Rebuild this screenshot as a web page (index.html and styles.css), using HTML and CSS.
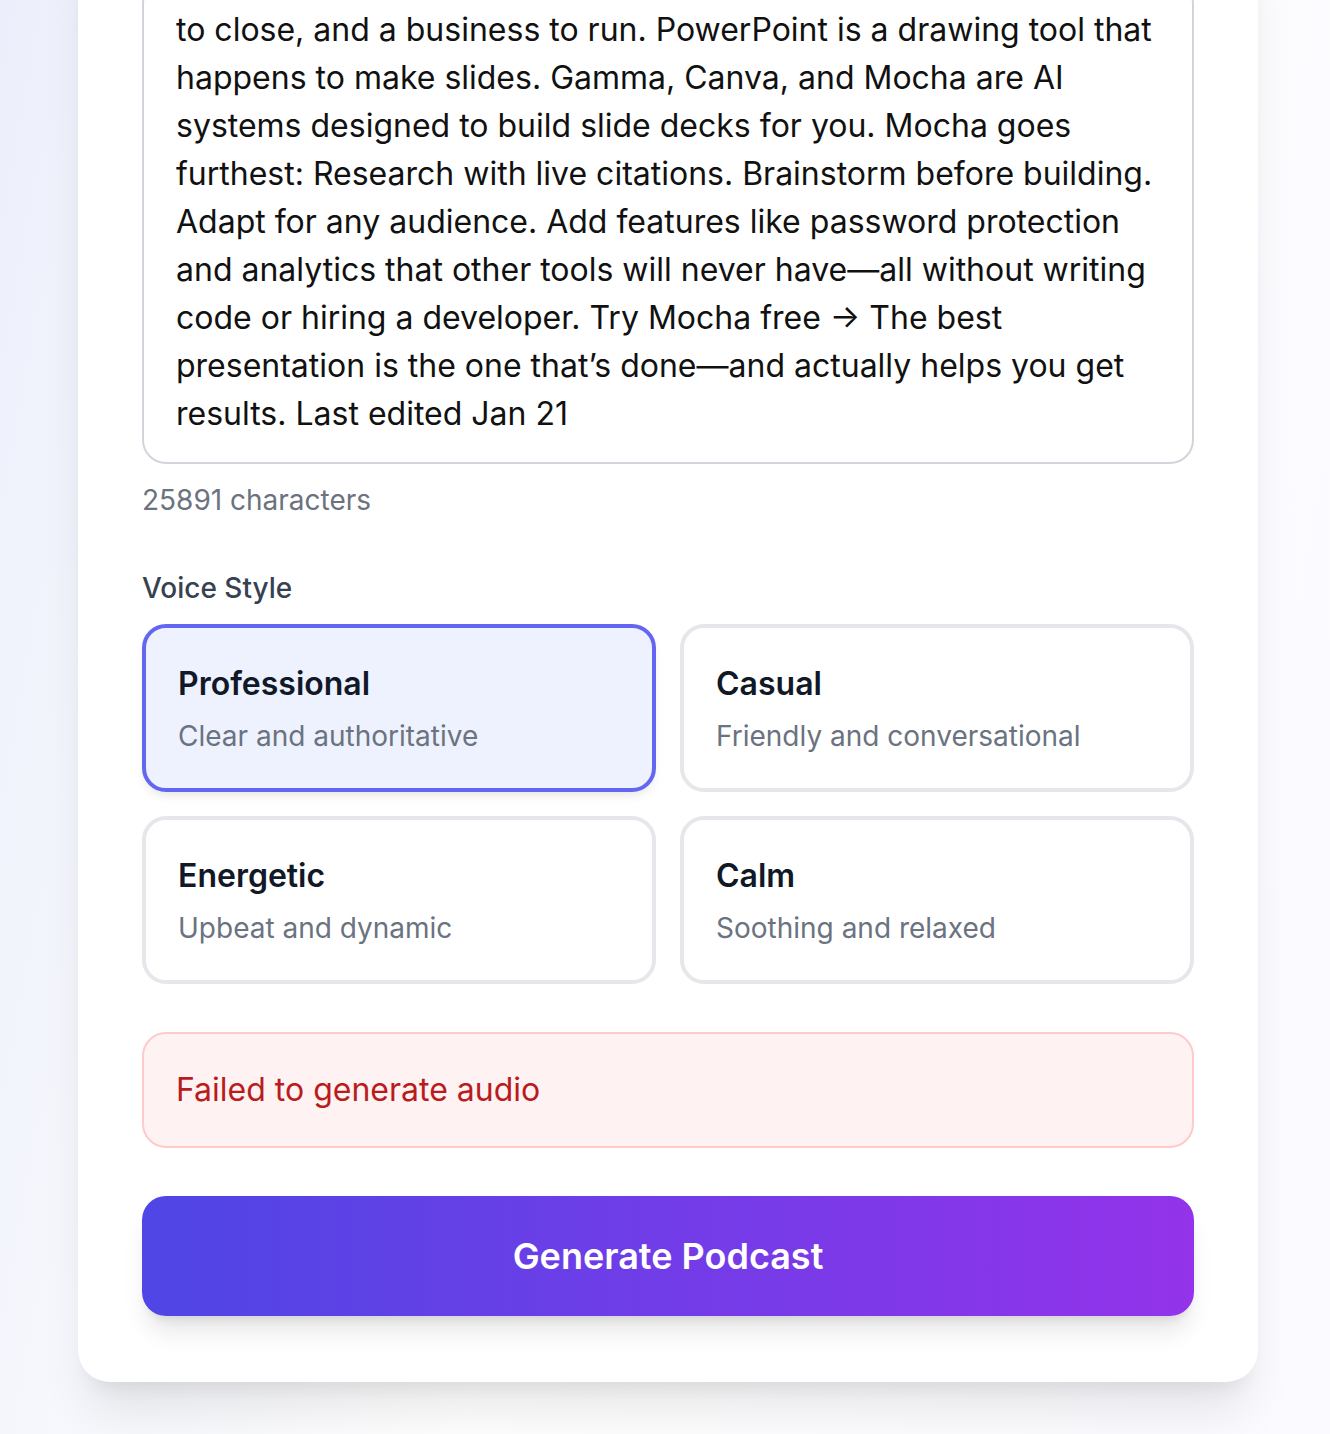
FILE: index.html
```html
<!DOCTYPE html>
<html lang="en">
<head>
  <meta charset="UTF-8" />
  <meta name="viewport" content="width=device-width, initial-scale=1" />
  <title>Podcast Generator</title>
  <link rel="stylesheet" href="styles.css">
</head>
<body>
  <main class="page">
    <section class="card">
      <div class="field">
        <div class="textarea">to close, and a business to run. PowerPoint is a drawing tool that happens to make slides. Gamma, Canva, and Mocha are AI systems designed to build slide decks for you. Mocha goes furthest: Research with live citations. Brainstorm before building. Adapt for any audience. Add features like password protection and analytics that other tools will never have—all without writing code or hiring a developer. Try Mocha free → The best presentation is the one that’s done—and actually helps you get results. Last edited Jan 21</div>
        <p class="count">25891 characters</p>
      </div>

      <div class="field">
        <label class="label">Voice Style</label>
        <div class="styles">
          <button class="style-option selected">
            <span class="style-name">Professional</span>
            <span class="style-desc">Clear and authoritative</span>
          </button>
          <button class="style-option">
            <span class="style-name">Casual</span>
            <span class="style-desc">Friendly and conversational</span>
          </button>
          <button class="style-option">
            <span class="style-name">Energetic</span>
            <span class="style-desc">Upbeat and dynamic</span>
          </button>
          <button class="style-option">
            <span class="style-name">Calm</span>
            <span class="style-desc">Soothing and relaxed</span>
          </button>
        </div>
      </div>

      <!-- error -->
      <div class="error">Failed to generate audio</div>

      <button class="generate">Generate Podcast</button>
    </section>
  </main>
</body>
</html>
```

FILE: styles.css
```css
body {
  margin: 0;
  font-family: Inter, "Noto Sans", sans-serif;
  background: linear-gradient(100deg, #eceffb 0%, #f7f8fd 20%, #ffffff 45%, #fbfaff 100%);
  min-height: 100vh;
  overflow: hidden;
}

.page {
  padding: 0 72px 53px 78px;
  margin-top: -84px;
}

.card {
  background: #fff;
  border-radius: 32px;
  padding: 64px 64px 66px;
  box-shadow: 0 40px 50px -10px rgba(0,0,0,0.09), 0 16px 20px -12px rgba(0,0,0,0.08);
}

.field {
  margin-bottom: 48px;
}

.textarea {
  border: 2px solid #d1d5db;
  border-radius: 24px;
  padding: 24px 32px;
  font-size: 32px;
  line-height: 48px;
  color: #111;
}

.count {
  margin: 16px 0 0;
  font-size: 28px;
  line-height: 40px;
  color: #6b7280;
}

.label {
  display: block;
  margin-bottom: 16px;
  font-size: 28px;
  line-height: 40px;
  font-weight: 500;
  color: #374151;
}

.styles {
  display: grid;
  grid-template-columns: 1fr 1fr;
  gap: 24px;
}

.style-option {
  display: flex;
  flex-direction: column;
  align-items: flex-start;
  padding: 32px;
  border: 4px solid #e5e7eb;
  border-radius: 24px;
  background: #fff;
  font-family: inherit;
  text-align: left;
  cursor: pointer;
}

.style-option.selected {
  border-color: #6366f1;
  background: #eef2ff;
  box-shadow: 0 6px 12px -4px rgba(0,0,0,0.12);
}

.style-name {
  font-size: 32px;
  line-height: 48px;
  font-weight: 600;
  color: #111827;
}

.style-desc {
  margin-top: 8px;
  font-size: 28px;
  line-height: 40px;
  color: #6b7280;
}

.error {
  margin-bottom: 48px;
  padding: 32px;
  border: 2px solid #fecaca;
  border-radius: 24px;
  background: #fef2f2;
  font-size: 32px;
  line-height: 48px;
  color: #b91c1c;
}

.generate {
  display: block;
  width: 100%;
  padding: 32px;
  border: none;
  border-radius: 24px;
  background: linear-gradient(90deg, #4f46e5, #9333ea);
  color: #fff;
  font-family: inherit;
  font-size: 36px;
  line-height: 56px;
  font-weight: 600;
  cursor: pointer;
  box-shadow: 0 20px 25px -5px rgba(0,0,0,0.1), 0 8px 10px -6px rgba(0,0,0,0.1);
}
```
